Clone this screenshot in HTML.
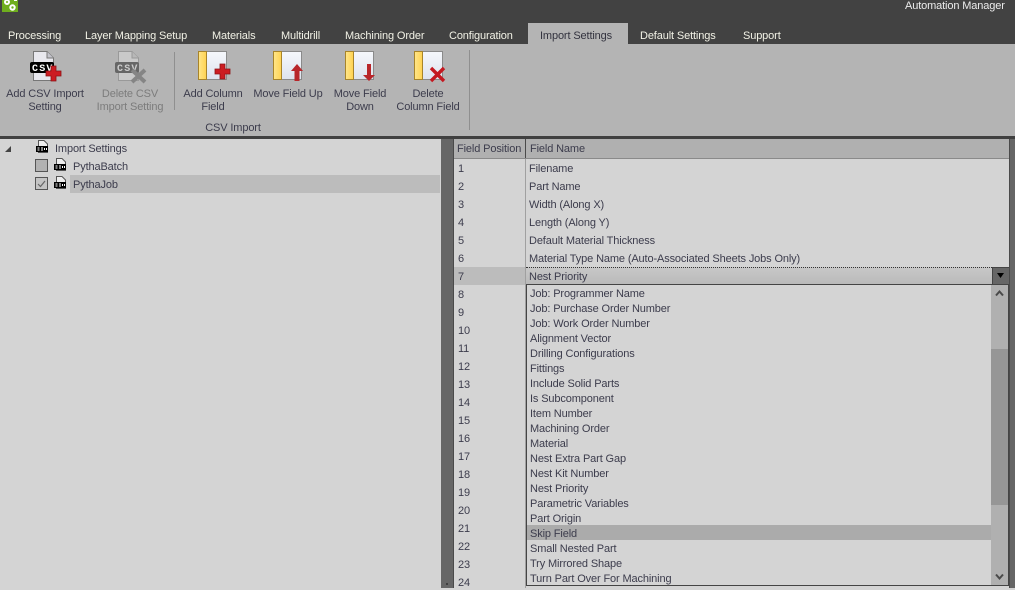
<!DOCTYPE html>
<html><head><meta charset="utf-8">
<style>
html,body{margin:0;padding:0}
body{width:1015px;height:588px;overflow:hidden;position:relative;background:#d4d4d4;font:11px/14px "Liberation Sans",sans-serif;color:#3c3c4c}
div{position:absolute}
.t,.tab,.rb,.n,.f,.l{margin-top:1px;letter-spacing:-.13px}
.t{white-space:pre}
.tab{top:28px;color:#f2f2e6;white-space:pre}
.rb{text-align:center;color:#3c3c4c;line-height:13px;top:87px;white-space:pre}
.n{left:458px;white-space:pre}
.f{left:529px;white-space:pre}
.l{left:530px;white-space:pre}
svg{position:absolute;overflow:visible}
</style></head><body>
<div style="left:0;top:0;width:1015px;height:44px;background:#424242"></div>
<div style="left:2px;top:0;width:16px;height:12px;background:#6fae1e"></div>
<svg style="left:2px;top:0" width="16" height="12"><circle cx="5" cy="2" r="2" fill="none" stroke="#fff" stroke-width="2"/><circle cx="10.500" cy="7.500" r="2.200" fill="none" stroke="#fff" stroke-width="2"/><rect x="12" y="0" width="3" height="1" fill="#fff"/></svg>
<div class="t" style="left:905px;top:-2px;color:#ececec">Automation Manager</div>
<div style="left:528px;top:23px;width:100px;height:21px;background:#b4b4b4"></div>
<div class="tab" style="left:8px">Processing</div>
<div class="tab" style="left:85px">Layer Mapping Setup</div>
<div class="tab" style="left:212px">Materials</div>
<div class="tab" style="left:281px">Multidrill</div>
<div class="tab" style="left:345px">Machining Order</div>
<div class="tab" style="left:449px">Configuration</div>
<div class="tab" style="left:540px;color:#33333f">Import Settings</div>
<div class="tab" style="left:640px">Default Settings</div>
<div class="tab" style="left:743px">Support</div>

<div style="left:0;top:44px;width:1015px;height:92px;background:#b4b4b4"></div>
<div style="left:0;top:136px;width:1015px;height:3px;background:#404040"></div>
<div style="left:174px;top:52px;width:1px;height:58px;background:#8f8f8f"></div>
<div style="left:469px;top:50px;width:1px;height:80px;background:#8f8f8f"></div>

<svg style="left:30px;top:50px" width="34" height="34">
<defs><linearGradient id="pg" x1="0" y1="0" x2="0" y2="1"><stop offset="0" stop-color="#f6f8fc"/><stop offset="1" stop-color="#dde3ee"/></linearGradient>
<linearGradient id="yl" x1="0" y1="0" x2="1" y2="0"><stop offset="0" stop-color="#ffe68a"/><stop offset="1" stop-color="#ffd250"/></linearGradient></defs>
<path d="M3.500 1.500H17L23.500 8V30.500H3.500Z" fill="#e8e8ee" stroke="#777"/><path d="M17 1.500V8H23.500" fill="#c4c4cc" stroke="#777"/>
<rect x="0" y="12" width="24" height="11" rx="2" fill="#000"/>
<text x="2" y="21" font-family="Liberation Mono" font-size="10" font-weight="bold" fill="#fff" letter-spacing="1.200">CSV</text>
<path d="M16 18h5v-5h5v5h5v5h-5v5h-5v-5h-5z" transform="translate(0,3)" fill="#cc1c22" stroke="#8c1216" stroke-width=".8"/></svg>
<svg style="left:115px;top:50px" width="34" height="34" opacity=".6">
<path d="M3.500 1.500H17L23.500 8V30.500H3.500Z" fill="#d8d8d8" stroke="#888"/><path d="M17 1.500V8H23.500" fill="#bbb" stroke="#888"/>
<rect x="0" y="12" width="24" height="11" rx="2" fill="#333"/>
<text x="2" y="21" font-family="Liberation Mono" font-size="10" font-weight="bold" fill="#ddd" letter-spacing="1.200">CSV</text>
<path d="M17 20l13 12M30 20l-13 12" stroke="#666" stroke-width="4"/></svg>

<svg style="left:198px;top:51px" width="34" height="32">
<rect x=".5" y=".5" width="28" height="28" fill="url(#pg)" stroke="#8a8a8a"/><rect x=".5" y=".5" width="8" height="28" fill="url(#yl)" stroke="#a8842a"/>
<path d="M17 19h5v-5h5v5h5v5h-5v5h-5v-5h-5z" transform="translate(0,-1)" fill="#cc1c22" stroke="#8c1216" stroke-width=".8"/></svg>
<svg style="left:273px;top:51px" width="34" height="32">
<rect x=".5" y=".5" width="28" height="28" fill="url(#pg)" stroke="#8a8a8a"/><rect x=".5" y=".5" width="8" height="28" fill="url(#yl)" stroke="#a8842a"/>
<path d="M24 13l6 7h-3.500v10h-5V20H18z" fill="#b8262a"/></svg>
<svg style="left:345px;top:51px" width="34" height="32">
<rect x=".5" y=".5" width="28" height="28" fill="url(#pg)" stroke="#8a8a8a"/><rect x=".5" y=".5" width="8" height="28" fill="url(#yl)" stroke="#a8842a"/>
<path d="M22 13h4v11h4l-6 6-6-6h4z" fill="#b8262a"/></svg>
<svg style="left:414px;top:51px" width="34" height="32">
<rect x=".5" y=".5" width="28" height="28" fill="url(#pg)" stroke="#8a8a8a"/><rect x=".5" y=".5" width="8" height="28" fill="url(#yl)" stroke="#a8842a"/>
<path d="M17 17l13 13M30 17L17 30" stroke="#c41820" stroke-width="3.400"/></svg>

<div class="rb" style="left:0;width:90px">Add CSV Import
Setting</div>
<div class="rb" style="left:85px;width:90px;color:#7c7c7c">Delete CSV
Import Setting</div>
<div class="rb" style="left:168px;width:90px">Add Column
Field</div>
<div class="rb" style="left:243px;width:90px">Move Field Up</div>
<div class="rb" style="left:315px;width:90px">Move Field
Down</div>
<div class="rb" style="left:383px;width:90px">Delete
Column Field</div>
<div class="rb" style="left:188px;width:90px;top:121px">CSV Import</div>

<!-- left tree -->
<div style="left:70px;top:175px;width:370px;height:18px;background:#bcbcbc"></div>
<svg style="left:5px;top:146px" width="7" height="7"><path d="M6 0V6H0Z" fill="#444"/></svg>
<svg style="left:36px;top:140px" width="13" height="14"><path d="M2.500.5H8L11.500 4V12.500H2.500Z" fill="#eee" stroke="#555"/><rect x="0" y="6" width="12" height="6" fill="#000"/><path d="M1.500 8h2M1.500 10h2M5 8h2M5 10h2M8.500 8v2M10.500 8v2" stroke="#fff"/></svg>
<svg style="left:54px;top:158px" width="13" height="14"><path d="M2.500.5H8L11.500 4V12.500H2.500Z" fill="#eee" stroke="#555"/><rect x="0" y="6" width="12" height="6" fill="#000"/><path d="M1.500 8h2M1.500 10h2M5 8h2M5 10h2M8.500 8v2M10.500 8v2" stroke="#fff"/></svg>
<svg style="left:54px;top:176px" width="13" height="14"><path d="M2.500.5H8L11.500 4V12.500H2.500Z" fill="#eee" stroke="#555"/><rect x="0" y="6" width="12" height="6" fill="#000"/><path d="M1.500 8h2M1.500 10h2M5 8h2M5 10h2M8.500 8v2M10.500 8v2" stroke="#fff"/></svg>
<svg style="left:35px;top:159px" width="13" height="13"><rect x=".5" y=".5" width="12" height="12" fill="#b2b2b2" stroke="#555"/></svg>
<svg style="left:35px;top:177px" width="13" height="13"><rect x=".5" y=".5" width="12" height="12" fill="#c4c4c4" stroke="#555"/><path d="M3 7l2.500 2.500L10 4" fill="none" stroke="#666" stroke-width="1.200"/></svg>
<div class="t" style="left:55px;top:141px">Import Settings</div>
<div class="t" style="left:73px;top:159px">PythaBatch</div>
<div class="t" style="left:73px;top:177px">PythaJob</div>

<!-- splitter -->
<div style="left:441px;top:139px;width:12px;height:449px;background:#666"></div>
<div style="left:446px;top:583px;width:2px;height:2px;background:#3e3e3e"></div>
<div style="left:453px;top:139px;width:1px;height:449px;background:#4a4a4a"></div>
<div style="left:1010px;top:139px;width:5px;height:449px;background:#666"></div>
<div style="left:1009px;top:139px;width:1px;height:449px;background:#4a4a4a"></div>

<!-- grid -->
<div style="left:454px;top:139px;width:555px;height:19px;background:#b0b0b0"></div>
<div style="left:454px;top:158px;width:555px;height:1px;background:#8a8a8a"></div>
<div style="left:525px;top:139px;width:1px;height:19px;background:#4a4a4a"></div>
<div style="left:525px;top:159px;width:1px;height:429px;background:#a0a0a0"></div>
<div class="t" style="left:457px;top:141px">Field Position</div>
<div class="t" style="left:530px;top:141px">Field Name</div>

<div style="left:454px;top:267px;width:71px;height:18px;background:#bcbcbc"></div>
<div style="left:526px;top:267px;width:466px;height:17px;background:linear-gradient(#c8c8c8,#bababa)"></div>
<div style="left:526px;top:267px;width:466px;height:0;border-top:1px dotted #333"></div>
<div style="left:992px;top:267px;width:17px;height:17px;background:#666;border-top:1px solid #444;border-left:1px solid #444;box-sizing:border-box"></div>
<svg style="left:996px;top:273px" width="9" height="6"><path d="M1 0H8L4.500 5Z" fill="#000"/></svg>

<div class="n" style="top:161px">1</div><div class="n" style="top:179px">2</div><div class="n" style="top:197px">3</div><div class="n" style="top:215px">4</div><div class="n" style="top:233px">5</div><div class="n" style="top:251px">6</div><div class="n" style="top:269px">7</div><div class="n" style="top:287px">8</div><div class="n" style="top:305px">9</div><div class="n" style="top:323px">10</div><div class="n" style="top:341px">11</div><div class="n" style="top:359px">12</div><div class="n" style="top:377px">13</div><div class="n" style="top:395px">14</div><div class="n" style="top:413px">15</div><div class="n" style="top:431px">16</div><div class="n" style="top:449px">17</div><div class="n" style="top:467px">18</div><div class="n" style="top:485px">19</div><div class="n" style="top:503px">20</div><div class="n" style="top:521px">21</div><div class="n" style="top:539px">22</div><div class="n" style="top:557px">23</div><div class="n" style="top:575px">24</div>

<div class="f" style="top:161px">Filename</div>
<div class="f" style="top:179px">Part Name</div>
<div class="f" style="top:197px">Width (Along X)</div>
<div class="f" style="top:215px">Length (Along Y)</div>
<div class="f" style="top:233px">Default Material Thickness</div>
<div class="f" style="top:251px">Material Type Name (Auto-Associated Sheets Jobs Only)</div>
<div class="f" style="top:269px">Nest Priority</div>

<!-- dropdown -->
<div style="left:526px;top:284px;width:483px;height:302px;box-sizing:border-box;border:1px solid #444;background:#d4d4d4"></div>
<div style="left:527px;top:525px;width:464px;height:15px;background:#ababab"></div>
<div style="left:991px;top:285px;width:17px;height:300px;background:#b0b0b0"></div>
<div style="left:991px;top:349px;width:17px;height:156px;background:#969696"></div>
<svg style="left:995px;top:289px" width="9" height="8"><path d="M1 6.500L4.500 2.500L8 6.500" fill="none" stroke="#4a4a4a" stroke-width="2"/></svg>
<svg style="left:995px;top:573px" width="9" height="8"><path d="M1 1.500L4.500 5.500L8 1.500" fill="none" stroke="#4a4a4a" stroke-width="2"/></svg>
<div class="l" style="top:286px">Job: Programmer Name</div>
<div class="l" style="top:301px">Job: Purchase Order Number</div>
<div class="l" style="top:316px">Job: Work Order Number</div>
<div class="l" style="top:331px">Alignment Vector</div>
<div class="l" style="top:346px">Drilling Configurations</div>
<div class="l" style="top:361px">Fittings</div>
<div class="l" style="top:376px">Include Solid Parts</div>
<div class="l" style="top:391px">Is Subcomponent</div>
<div class="l" style="top:406px">Item Number</div>
<div class="l" style="top:421px">Machining Order</div>
<div class="l" style="top:436px">Material</div>
<div class="l" style="top:451px">Nest Extra Part Gap</div>
<div class="l" style="top:466px">Nest Kit Number</div>
<div class="l" style="top:481px">Nest Priority</div>
<div class="l" style="top:496px">Parametric Variables</div>
<div class="l" style="top:511px">Part Origin</div>
<div class="l" style="top:526px">Skip Field</div>
<div class="l" style="top:541px">Small Nested Part</div>
<div class="l" style="top:556px">Try Mirrored Shape</div>
<div class="l" style="top:571px">Turn Part Over For Machining</div>
</body></html>
